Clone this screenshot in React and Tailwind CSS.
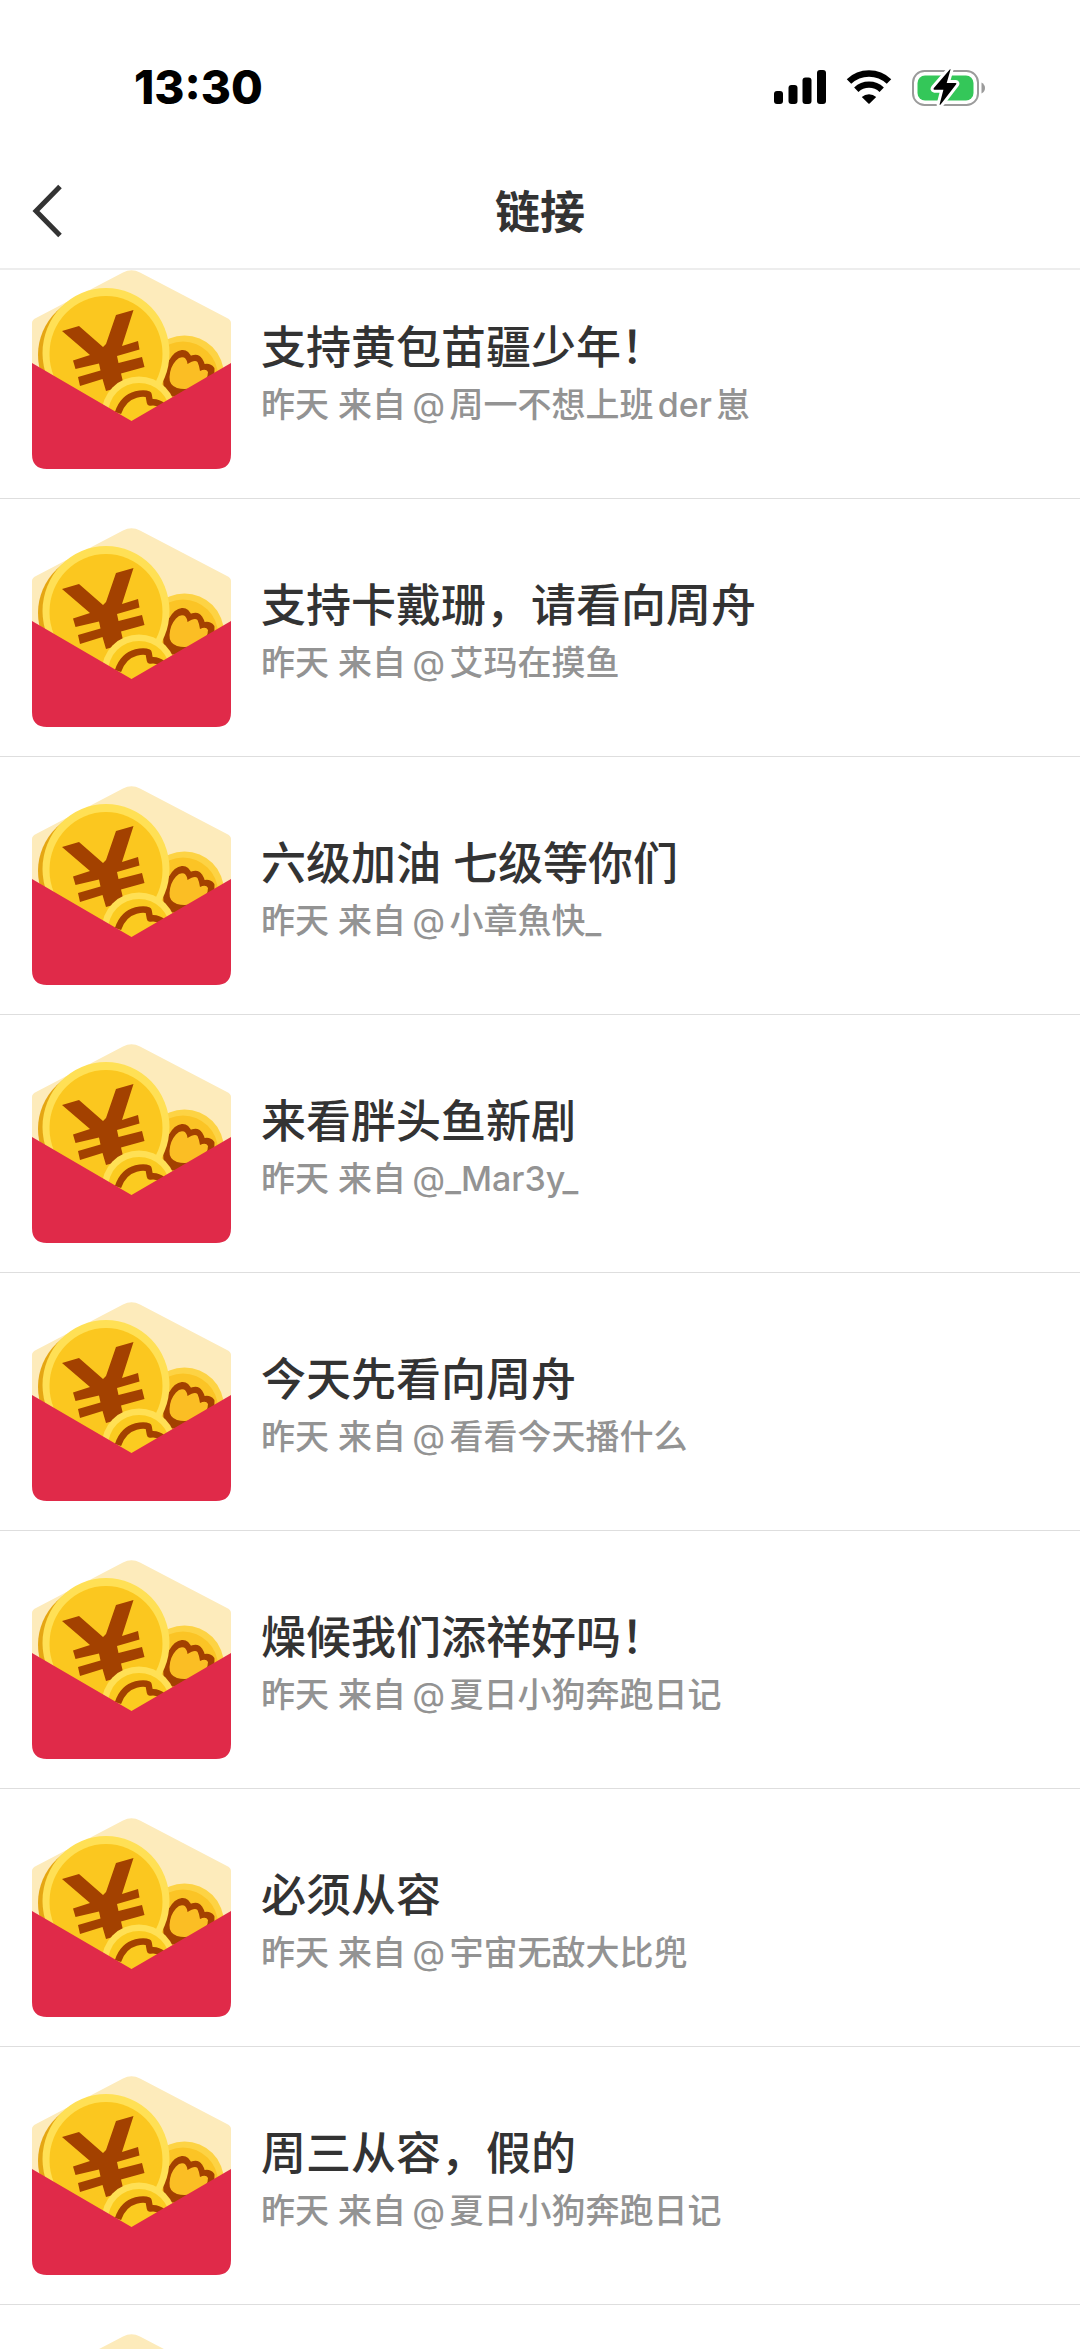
const links = [
    { title: '支持黄包苗疆少年！', from: '周一不想上班der崽' },
    { title: '支持卡戴珊，请看向周舟', from: '艾玛在摸鱼' },
    { title: '六级加油 七级等你们', from: '小章魚快_' },
    { title: '来看胖头鱼新剧', from: '_Mar3y_' },
    { title: '今天先看向周舟', from: '看看今天播什么' },
    { title: '燥候我们添祥好吗！', from: '夏日小狗奔跑日记' },
    { title: '必须从容', from: '宇宙无敌大比兜' },
    { title: '周三从容，假的', from: '夏日小狗奔跑日记' },
]

function SignalIcon() {
    return (
        <svg width="52" height="34" viewBox="0 0 52 34" aria-hidden="true">
            <rect x="0" y="21" width="9" height="13" rx="3" />
            <rect x="14.5" y="15" width="9" height="19" rx="3" />
            <rect x="28.5" y="7.5" width="9" height="26.5" rx="3" />
            <rect x="43" y="0" width="9" height="34" rx="3" />
        </svg>
    )
}

function WifiIcon() {
    return (
        <svg width="46" height="34" viewBox="0 0 46 34" aria-hidden="true">
            <path d="M3 11.5A29 29 0 0 1 43 11.5" fill="none" stroke="#000" strokeWidth="6.5" />
            <path d="M10.3 19.7A18.5 18.5 0 0 1 35.7 19.7" fill="none" stroke="#000" strokeWidth="6.3" />
            <path d="M15.8 27A10.8 10.8 0 0 1 30.2 27L23.6 33.4Q23 34 22.4 33.4Z" />
        </svg>
    )
}

function BatteryIcon() {
    const bolt = 'M38 0.3Q38.8 -0.2 38.4 1L34.7 14H43.6Q45 14.2 44 15.5L28.6 35.5Q27.4 36.7 27.7 35L31.4 20.7H22.3Q21 20.4 21.9 19Z'
    return (
        <svg width="74" height="37" viewBox="0 0 74 37" aria-hidden="true">
            <rect x="1" y="2" width="65" height="34" rx="11.5" fill="none" stroke="#9b9b9b" strokeWidth="2" />
            <rect x="5.5" y="6.5" width="56" height="25" rx="7.5" fill="#34c759" />
            <path d="M69.5 13.5Q73 15.5 73 19T69.5 24.5Z" fill="#9b9b9b" />
            <path d={bolt} fill="#fff" stroke="#fff" strokeWidth="6" strokeLinejoin="round" />
            <path d={bolt} />
        </svg>
    )
}

function RedPacket() {
    return (
        <svg className="size-[199px] shrink-0" viewBox="0 0 199 199" aria-hidden="true">
            <path d="M0 53Q0 50 4 48L91 2.5Q99.5 -2 108 2.5L195 48Q199 50 199 53V110H0Z" fill="#fdebbb" />

            <circle cx="152.5" cy="105" r="39.5" fill="#fdd344" />
            <circle cx="151" cy="106.5" r="35" fill="#fbc425" />
            <path
                d="M134 116Q132 100 139 92Q144 83 150 82.5Q155 82 157.5 89Q165 85 168 90Q170 93 171 97Q177 95 180 99Q181 108 172 116L158 124H140Z"
                fill="#a34100"
                stroke="#a34100"
                strokeWidth="5"
                strokeLinejoin="round"
            />
            <path d="M137.500 107Q138 97 144 90.500Q148 86 152 87.500Q155 89 155.500 94Q163 89 165.500 92Q167 95 168 101Q174 98 176 102Q176 110 168 115Q156 121 145 118Q137 115 137.500 107Z" fill="#fbbe24" />

            <ellipse cx="70" cy="85" rx="64" ry="62" fill="#e5a613" />
            <ellipse cx="74" cy="83" rx="63.5" ry="65" fill="#ffe055" />
            <ellipse cx="74" cy="84" rx="56.5" ry="58" fill="#fbc71f" />
            <path
                d="M30 61L47 56L71 77L74 74L84 45L101.5 40L90 76L106 71L107.5 79.5L85 86L86.5 93L110 87L112.5 97L89 103.5L92 116L74 121L70.5 109L48 116L46 107L68.5 100.5L67 93.5L43.5 99L41 90.5L58 85Z"
                fill="#a34100"
            />

            <circle cx="107" cy="144" r="37.5" fill="#ffe055" />
            <circle cx="107" cy="144" r="31" fill="#fbcb20" />
            <path d="M86 143Q91 128 104 124.5Q112 122.5 116.5 124.5L118 132.5Q125 131 131 136" fill="none" stroke="#a34100" strokeWidth="6.5" strokeLinejoin="round" />

            <path d="M0 93L99.5 151L199 93V184Q199 199 184 199H15Q0 199 0 184Z" fill="#e02a49" />
        </svg>
    )
}

function LinkRow({ title, from }) {
    return (
        <li className="border-b border-[#dedede] first:-mt-[29px]">
            <a href="#" className="flex items-center gap-[30px] px-8 py-[29px]">
                <RedPacket />
                {title && (
                    <div className="min-w-0 pt-2">
                        <h2 className="text-[45px] leading-[62px] font-medium text-[#333]">{title}</h2>
                        <p className="text-[34px] leading-[52px] font-medium text-[#939393] [text-autospace:normal]">
                            昨天 来自<span className="ml-0.5 font-normal">@</span>{from}
                        </p>
                    </div>
                )}
            </a>
        </li>
    )
}

function App() {
    return (
        <div className="h-screen overflow-hidden bg-white font-[Inter,'Noto_Sans_CJK_SC',sans-serif]" lang="zh-CN">
            <div className="flex h-[150px] items-center justify-between pt-6 pr-[94px] pl-[134px]">
                <span className="text-[46px] leading-none font-extrabold text-black">13:30</span>
                <div className="flex items-center gap-5">
                    <SignalIcon />
                    <WifiIcon />
                    <BatteryIcon />
                </div>
            </div>
            <header className="relative z-10 grid h-[120px] grid-cols-3 items-center border-b-2 border-[#ededed] bg-white px-8 pt-1">
                <button type="button" aria-label="返回" className="justify-self-start">
                    <svg width="31" height="54" viewBox="0 0 31 54" fill="none" stroke="#333" strokeWidth="5" aria-hidden="true">
                        <path d="M28 2.5L4 27L28 51.5" />
                    </svg>
                </button>
                <h1 className="pt-1 text-center text-[45px] leading-[60px] font-bold text-[#333]">链接</h1>
            </header>
            <ul>
                {links.map((link, i) => (
                    <LinkRow key={i} title={link.title} from={link.from} />
                ))}
                <LinkRow />
            </ul>
        </div>
    )
}

export default App
